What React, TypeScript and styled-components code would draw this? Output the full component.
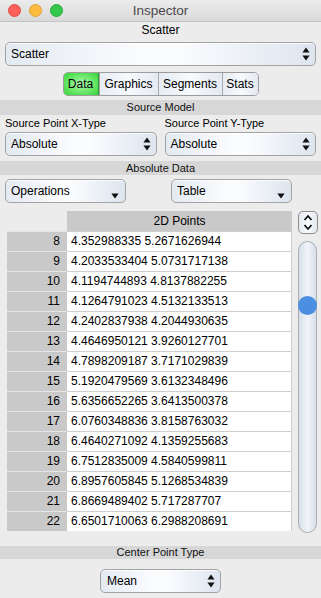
import styled, { createGlobalStyle } from "styled-components";

const GlobalStyle = createGlobalStyle`
  html, body {
    margin: 0;
    padding: 0;
    background: #ececec;
  }
  body {
    font-family: "Liberation Sans", Arial, sans-serif;
    color: #000;
  }
`;

const rows: [number, string][] = [
  [8, "4.352988335 5.2671626944"],
  [9, "4.2033533404 5.0731717138"],
  [10, "4.1194744893 4.8137882255"],
  [11, "4.1264791023 4.5132133513"],
  [12, "4.2402837938 4.2044930635"],
  [13, "4.4646950121 3.9260127701"],
  [14, "4.7898209187 3.7171029839"],
  [15, "5.1920479569 3.6132348496"],
  [16, "5.6356652265 3.6413500378"],
  [17, "6.0760348836 3.8158763032"],
  [18, "6.4640271092 4.1359255683"],
  [19, "6.7512835009 4.5840599811"],
  [20, "6.8957605845 5.1268534839"],
  [21, "6.8669489402 5.717287707"],
  [22, "6.6501710063 6.2988208691"],
];

const Window = styled.div`
  width: 321px;
  height: 598px;
  display: flex;
  flex-direction: column;
  background: #ececec;
  overflow: hidden;
`;

const TitleBar = styled.div`
  height: 21px;
  border-bottom: 1px solid #c4c4c4;
  background: linear-gradient(#ececec, #d9d9d9);
  display: flex;
  align-items: center;
  position: relative;
`;

const Lights = styled.div`
  display: flex;
  gap: 8px;
  padding-left: 8px;
`;

const Light = styled.span<{ $c: string; $b: string }>`
  width: 11px;
  height: 11px;
  border-radius: 50%;
  background: ${(p) => p.$c};
  border: 0.5px solid ${(p) => p.$b};
`;

const Title = styled.div`
  position: absolute;
  left: 0;
  right: 0;
  text-align: center;
  font-size: 13.5px;
  color: #4a4a4a;
  line-height: 21px;
  pointer-events: none;
`;

const Heading = styled.div`
  height: 16px;
  line-height: 16px;
  text-align: center;
  font-size: 12px;
  margin-bottom: 4px;
`;

const Band = styled.div<{ $h: number }>`
  height: ${(p) => p.$h}px;
  line-height: ${(p) => p.$h}px;
  background: #d7d7d7;
  text-align: center;
  font-size: 11px;
  color: #111;
`;

const Popup = styled.div<{ $w?: string; $pl?: number }>`
  box-sizing: border-box;
  width: ${(p) => p.$w ?? "auto"};
  height: 24px;
  border: 1px solid #a3a3a3;
  border-radius: 5px;
  background: linear-gradient(90deg, #e4eaf2 0%, #fbfcfe 45%, #fbfcfe 55%, #dde5ef 100%);
  box-shadow: inset 0 1px 0 rgba(255, 255, 255, 0.8);
  display: flex;
  align-items: center;
  justify-content: space-between;
  padding: 0 5px 0 ${(p) => p.$pl ?? 5}px;
  font-size: 12px;
`;

const PullDown = styled(Popup)`
  align-items: stretch;
  padding-right: 6px;
  span {
    align-self: center;
  }
  svg {
    align-self: flex-end;
    margin-bottom: 3px;
  }
`;

const Segmented = styled.div`
  align-self: center;
  display: flex;
  height: 24px;
  box-sizing: border-box;
  border: 1px solid #9c9c9c;
  border-radius: 5px;
  overflow: hidden;
  margin-bottom: 4px;
`;

const Segment = styled.div<{ $w: number; $on?: boolean }>`
  box-sizing: border-box;
  width: ${(p) => p.$w}px;
  display: flex;
  align-items: center;
  justify-content: center;
  font-size: 12px;
  border-left: 1px solid #a8a8a8;
  &:first-child {
    border-left: none;
  }
  background: ${(p) =>
    p.$on
      ? "radial-gradient(ellipse at center, #b4f8b4 0%, #68e868 55%, #38d038 100%)"
      : "linear-gradient(90deg, #e6ecf3, #f7f9fc 50%, #e4eaf2)"};
  ${(p) => (p.$on ? "border-right: 1px solid #2a9a2a;" : "")}
`;

const Padded = styled.div<{ $mb: number }>`
  padding: 0 5px;
  margin-bottom: ${(p) => p.$mb}px;
  display: flex;
  flex-direction: column;
`;

const TwoCol = styled.div<{ $cols: string; $gap: number; $mb: number; $mt?: number }>`
  display: grid;
  grid-template-columns: ${(p) => p.$cols};
  column-gap: ${(p) => p.$gap}px;
  padding: 0 5px;
  margin-top: ${(p) => p.$mt ?? 0}px;
  margin-bottom: ${(p) => p.$mb}px;
`;

const Label = styled.div`
  font-size: 11px;
  height: 17px;
  line-height: 17px;
`;

const TableArea = styled.div`
  display: flex;
  gap: 6px;
  padding-left: 7px;
  margin-bottom: 13px;
`;

const Table = styled.div`
  width: 285px;
  display: grid;
  grid-template-columns: 60px 225px;
  grid-auto-rows: 20px;
  font-size: 12px;
`;

const Corner = styled.div``;

const HeadCell = styled.div`
  background: #c9c9c9;
  text-align: center;
  line-height: 20px;
`;

const NumCell = styled.div`
  box-sizing: border-box;
  background: #c9c9c9;
  border-top: 1px solid #e6e6e6;
  text-align: right;
  padding-right: 7px;
  line-height: 19px;
`;

const DataCell = styled.div`
  box-sizing: border-box;
  background: #fff;
  border-top: 1px solid #cfcfcf;
  border-right: 1px solid #cfcfcf;
  padding-left: 4px;
  line-height: 19px;
  white-space: nowrap;
`;

const Side = styled.div`
  width: 20px;
  display: flex;
  flex-direction: column;
  gap: 7px;
`;

const Stepper = styled.div`
  box-sizing: border-box;
  width: 20px;
  height: 23px;
  border: 1px solid #8e8e8e;
  border-radius: 5px;
  background: linear-gradient(90deg, #e4eaf2, #fafbfd 50%, #e2e8f0);
  display: flex;
  align-items: center;
  justify-content: center;
`;

const Track = styled.div`
  box-sizing: border-box;
  position: relative;
  width: 19px;
  height: 292px;
  border: 1px solid #a9acb0;
  border-radius: 10px;
  background: linear-gradient(90deg, #d6dfea 0%, #f1f4f8 50%, #d6dfea 100%);
`;

const Knob = styled.div`
  position: absolute;
  left: -1px;
  top: 54px;
  width: 19px;
  height: 19px;
  border-radius: 50%;
  background: #4a8fe1;
`;

const Center = styled.div`
  display: flex;
  justify-content: center;
  margin-top: 10px;
`;

const UpDown = () => (
  <svg width="8" height="14" viewBox="0 0 8 14">
    <path d="M4 0.5 L7.6 5.5 L0.4 5.5 Z" fill="#111" />
    <path d="M4 13.5 L7.6 8.5 L0.4 8.5 Z" fill="#111" />
  </svg>
);

const Down = () => (
  <svg width="8" height="6" viewBox="0 0 8 6">
    <path d="M0.3 0.5 L7.7 0.5 L4 5.5 Z" fill="#111" />
  </svg>
);

const Chevrons = () => (
  <svg width="10" height="17" viewBox="0 0 10 17">
    <path d="M1.5 6 L5 2 L8.5 6" stroke="#111" strokeWidth="1.8" fill="none" />
    <path d="M1.5 11 L5 15 L8.5 11" stroke="#111" strokeWidth="1.8" fill="none" />
  </svg>
);

export default function App() {
  return (
    <Window>
      <GlobalStyle />
      <TitleBar>
        <Lights>
          <Light $c="#fc605b" $b="#de4a45" />
          <Light $c="#fdbc40" $b="#dea236" />
          <Light $c="#34c84a" $b="#28a83a" />
        </Lights>
        <Title>Inspector</Title>
      </TitleBar>
      <Heading>Scatter</Heading>
      <Padded $mb={6}>
        <Popup>
          <span>Scatter</span>
          <UpDown />
        </Popup>
      </Padded>
      <Segmented>
        <Segment $w={35} $on>Data</Segment>
        <Segment $w={59}>Graphics</Segment>
        <Segment $w={64}>Segments</Segment>
        <Segment $w={36}>Stats</Segment>
      </Segmented>
      <Band $h={15}>Source Model</Band>
      <TwoCol $cols="1fr 1fr" $gap={8} $mb={0}>
        <Label>Source Point X-Type</Label>
        <Label>Source Point Y-Type</Label>
      </TwoCol>
      <TwoCol $cols="1fr 1fr" $gap={8} $mb={5}>
        <Popup>
          <span>Absolute</span>
          <UpDown />
        </Popup>
        <Popup>
          <span>Absolute</span>
          <UpDown />
        </Popup>
      </TwoCol>
      <Band $h={14}>Absolute Data</Band>
      <TwoCol $cols="121px 121px" $gap={45} $mt={4} $mb={8}>
        <PullDown>
          <span>Operations</span>
          <Down />
        </PullDown>
        <PullDown>
          <span>Table</span>
          <Down />
        </PullDown>
      </TwoCol>
      <TableArea>
        <Table>
          <Corner />
          <HeadCell>2D Points</HeadCell>
          {rows.map(([n, v]) => [
            <NumCell key={`n${n}`}>{n}</NumCell>,
            <DataCell key={`d${n}`}>{v}</DataCell>,
          ])}
        </Table>
        <Side>
          <Stepper>
            <Chevrons />
          </Stepper>
          <Track>
            <Knob />
          </Track>
        </Side>
      </TableArea>
      <Band $h={13}>Center Point Type</Band>
      <Center>
        <Popup $w="121px" $pl={6}>
          <span>Mean</span>
          <UpDown />
        </Popup>
      </Center>
    </Window>
  );
}
